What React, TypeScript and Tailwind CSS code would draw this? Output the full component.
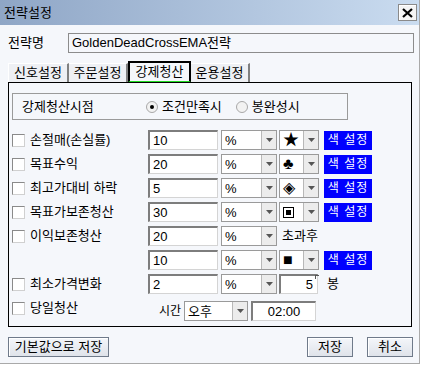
const FONT = { fontFamily: "'Liberation Sans', 'Noto Sans CJK KR', sans-serif" };

function Sunken({ value, className = "", align = "left" }: { value: string; className?: string; align?: "left" | "right" | "center" }) {
  const a = align === "right" ? "justify-end pr-1" : align === "center" ? "justify-center" : "pl-[3px]";
  return (
    <div
      className={`flex h-[20px] items-center border-t-2 border-l-2 border-r border-b border-t-[#7d7d7d] border-l-[#7d7d7d] border-r-[#d4d4d4] border-b-[#d4d4d4] bg-white text-[13px] leading-none text-black ${a} ${className}`}
    >
      {value}
    </div>
  );
}

function Combo({ value, className = "", big = false }: { value: React.ReactNode; className?: string; big?: boolean }) {
  return (
    <div className={`flex h-[20px] border border-[#9a9a9a] bg-white ${className}`}>
      <div className={`flex flex-1 items-center pl-[3px] leading-none text-black ${big ? "text-[16px]" : "text-[13px]"}`}>
        {value}
      </div>
      <div className="flex w-[15px] items-center justify-center border-l border-[#b8b8b8] bg-[#ececec]">
        <svg width="7" height="4" viewBox="0 0 7 4">
          <path d="M0 0h7L3.5 4z" fill="#555" />
        </svg>
      </div>
    </div>
  );
}

function ColorBtn() {
  return (
    <div className="ml-[5px] flex h-[19px] w-[48px] items-center justify-center bg-[#0000ff] text-[12px] tracking-[1px] text-white">
      색 설정
    </div>
  );
}

function Check() {
  return <div className="h-[13px] w-[13px] border border-t-[#8a8a8a] border-l-[#8a8a8a] border-r-[#d0d0d0] border-b-[#d0d0d0] bg-white" />;
}

function Row({ label, children, check = true }: { label?: string; children: React.ReactNode; check?: boolean }) {
  return (
    <div className="flex h-[24px] items-center">
      <div className="flex w-[139px] items-center gap-[5px] pl-[3px]">
        {check ? <Check /> : null}
        {label ? <span className="text-[13px] text-black">{label}</span> : null}
      </div>
      {children}
    </div>
  );
}

function Button({ label, className = "" }: { label: string; className?: string }) {
  return (
    <div
      className={`flex h-[20px] items-center justify-center border border-[#6f7a8a] bg-gradient-to-b from-[#f4f6fa] to-[#dfe3ea] text-[13px] text-black shadow-[inset_1px_1px_0_#ffffff] ${className}`}
    >
      {label}
    </div>
  );
}

function Radio({ on }: { on: boolean }) {
  return (
    <div className="flex h-[12px] w-[12px] items-center justify-center rounded-full border border-[#a8a8a8] bg-[#f2f2f2]">
      {on ? <div className="h-[4px] w-[4px] rounded-full bg-black" /> : null}
    </div>
  );
}

const BoxedSquare = (
  <div className="flex h-[11px] w-[11px] items-center justify-center border border-black">
    <div className="h-[5px] w-[5px] bg-black" />
  </div>
);

export default function App() {
  return (
    <div style={FONT} className="h-[365px] w-[422px] overflow-hidden bg-white">
      <div className="flex h-[364px] w-[420px] flex-col border-r border-b border-[#a9a9a9] bg-[#f5f7fb]">
        <div className="flex h-[25px] items-center justify-between bg-gradient-to-r from-[#8fa6c6] to-[#cadcf0] pl-[4px] pr-[2px]">
          <span className="text-[13px] text-black">전략설정</span>
          <div className="flex h-[17px] w-[19px] items-center justify-center border border-[#8a8a8a] bg-[#f4f4f4] shadow-[inset_1px_1px_0_#ffffff]">
            <svg width="11" height="10" viewBox="0 0 11 10">
              <path d="M1 1l9 8M10 1l-9 8" stroke="#000" strokeWidth="2.2" />
            </svg>
          </div>
        </div>

        <div className="mt-[8px] flex h-[20px] items-center pl-[8px]">
          <span className="w-[60px] text-[13px] text-black">전략명</span>
          <div className="flex h-[20px] w-[346px] items-center border border-[#8c8c8c] bg-[#f5f7fb] pl-[3px] text-[13px] text-black">
            GoldenDeadCrossEMA전략
          </div>
        </div>

        <div className="mt-[8px] flex h-[21px] items-end pl-[8px]">
          <div className="flex h-[19px] w-[61px] items-center justify-center border-t border-l border-r-2 border-t-white border-l-white border-r-[#808080] bg-[#eef0f4] text-[13px] text-black">
            신호설정
          </div>
          <div className="flex h-[19px] w-[59px] items-center justify-center border-t border-r-2 border-t-white border-r-[#808080] bg-[#eef0f4] text-[13px] text-black">
            주문설정
          </div>
          <div className="flex h-[21px] w-[63px] items-center justify-center border-2 border-b border-black border-b-[#22dd22] bg-[#f5f7fb] text-[13px] text-black">
            강제청산
          </div>
          <div className="flex h-[19px] w-[59px] items-center justify-center border-t border-r-2 border-t-white border-r-[#808080] bg-[#eef0f4] text-[13px] text-black">
            운용설정
          </div>
        </div>

        <div className="ml-[8px] flex h-[245px] w-[404px] flex-col border border-black">
          <div className="ml-[3px] mt-[10px] flex h-[27px] w-[336px] items-center border border-[#9a9a9a] pl-[9px]">
            <span className="w-[124px] text-[13px] text-black">강제청산시점</span>
            <div className="flex items-center gap-[4px]">
              <Radio on />
              <span className="text-[13px] text-black">조건만족시</span>
            </div>
            <div className="ml-[14px] flex items-center gap-[4px]">
              <Radio on={false} />
              <span className="text-[13px] text-black">봉완성시</span>
            </div>
          </div>

          <div className="mt-[8px] flex flex-col">
            <Row label="손절매(손실률)">
              <Sunken value="10" className="w-[70px]" />
              <Combo value="%" className="ml-[3px] w-[56px]" />
              <Combo value="★" className="ml-[2px] w-[40px]" big />
              <ColorBtn />
            </Row>
            <Row label="목표수익">
              <Sunken value="20" className="w-[70px]" />
              <Combo value="%" className="ml-[3px] w-[56px]" />
              <Combo value="♣" className="ml-[2px] w-[40px]" big />
              <ColorBtn />
            </Row>
            <Row label="최고가대비 하락">
              <Sunken value="5" className="w-[70px]" />
              <Combo value="%" className="ml-[3px] w-[56px]" />
              <Combo value="◈" className="ml-[2px] w-[40px]" big />
              <ColorBtn />
            </Row>
            <Row label="목표가보존청산">
              <Sunken value="30" className="w-[70px]" />
              <Combo value="%" className="ml-[3px] w-[56px]" />
              <Combo value={BoxedSquare} className="ml-[2px] w-[40px]" big />
              <ColorBtn />
            </Row>
            <Row label="이익보존청산">
              <Sunken value="20" className="w-[70px]" />
              <Combo value="%" className="ml-[3px] w-[56px]" />
              <span className="ml-[5px] text-[13px] text-black">초과후</span>
            </Row>
            <Row check={false}>
              <Sunken value="10" className="w-[70px]" />
              <Combo value="%" className="ml-[3px] w-[56px]" />
              <Combo value="■" className="ml-[2px] w-[40px]" big />
              <ColorBtn />
            </Row>
            <Row label="최소가격변화">
              <Sunken value="2" className="w-[70px]" />
              <Combo value="%" className="ml-[3px] w-[56px]" />
              <div className="relative ml-[2px]">
                <Sunken value="5" className="w-[39px]" align="right" />
                <div className="absolute right-[-1px] top-[1px] h-[4px] w-[4px] border-t border-l border-[#555]" />
              </div>
              <span className="ml-[9px] text-[13px] text-black">봉</span>
            </Row>
            <Row label="당일청산">
              <div className="mt-[6px] flex items-center">
                <span className="ml-[11px] w-[25px] whitespace-nowrap text-[12px] text-black">시간</span>
                <Combo value="오후" className="w-[64px]" />
                <Sunken value="02:00" className="ml-[3px] w-[65px]" align="center" />
              </div>
            </Row>
          </div>
        </div>

        <div className="mt-[10px] flex items-center pl-[8px]">
          <Button label="기본값으로 저장" className="w-[101px]" />
          <div className="flex-1" />
          <Button label="저장" className="w-[46px]" />
          <Button label="취소" className="ml-[14px] mr-[6px] w-[46px]" />
        </div>
      </div>
    </div>
  );
}
